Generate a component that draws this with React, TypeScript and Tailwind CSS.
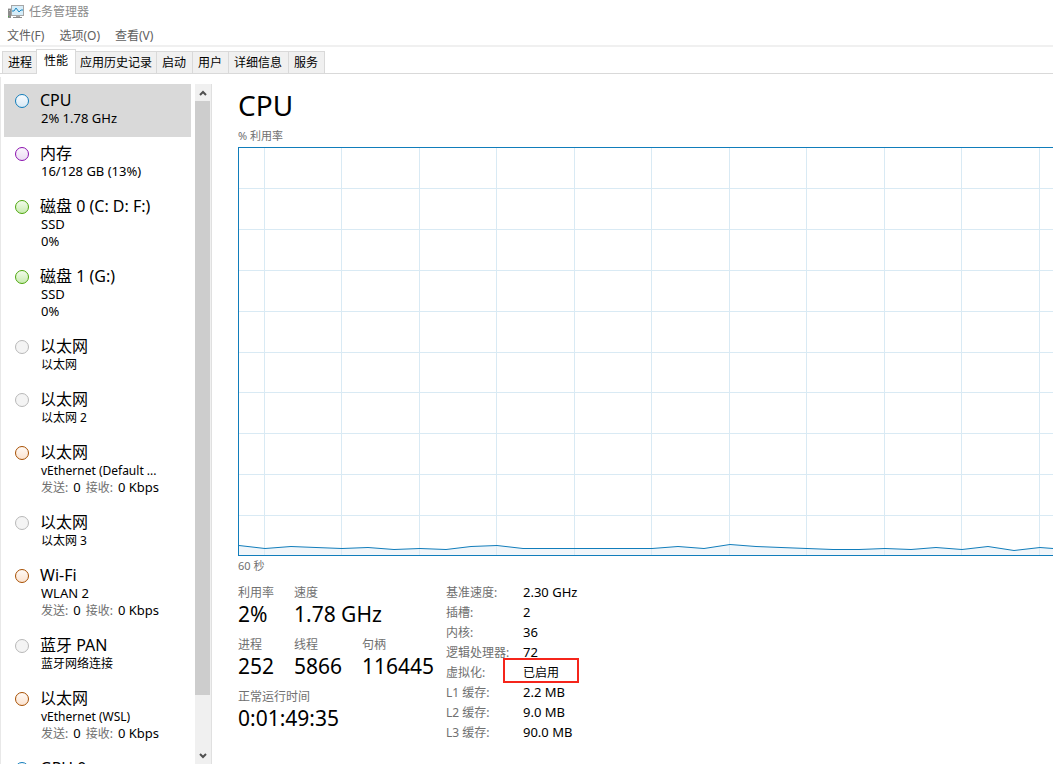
import type { ReactNode } from "react";

const menus = ["文件(F)", "选项(O)", "查看(V)"];
const tabs = ["进程", "性能", "应用历史记录", "启动", "用户", "详细信息", "服务"];

const dots = {
  blue: "border-[#117dbb] from-[#f8fbfe] to-[#d8e9f5]",
  purple: "border-[#8b12ae] from-[#fbf6fd] to-[#ecdcf3]",
  green: "border-[#4da60c] from-[#f3fbec] to-[#c8ebb0]",
  gray: "border-[#b8b8b8] from-[#f4f4f4] to-[#f4f4f4]",
  orange: "border-[#a74f01] from-[#fffaf6] to-[#fbe3d0]",
};

type Device = {
  name: string;
  dot: keyof typeof dots;
  detail: string;
  extra?: string;
  traffic?: boolean;
};

const devices: Device[] = [
  { name: "CPU", dot: "blue", detail: "2% 1.78 GHz" },
  { name: "内存", dot: "purple", detail: "16/128 GB (13%)" },
  { name: "磁盘 0 (C: D: F:)", dot: "green", detail: "SSD", extra: "0%" },
  { name: "磁盘 1 (G:)", dot: "green", detail: "SSD", extra: "0%" },
  { name: "以太网", dot: "gray", detail: "以太网" },
  { name: "以太网", dot: "gray", detail: "以太网 2" },
  { name: "以太网", dot: "orange", detail: "vEthernet (Default ...", traffic: true },
  { name: "以太网", dot: "gray", detail: "以太网 3" },
  { name: "Wi-Fi", dot: "orange", detail: "WLAN 2", traffic: true },
  { name: "蓝牙 PAN", dot: "gray", detail: "蓝牙网络连接" },
  { name: "以太网", dot: "orange", detail: "vEthernet (WSL)", traffic: true },
  { name: "GPU 0", dot: "blue", detail: "" },
];

const specs = [
  ["基准速度:", "2.30 GHz"],
  ["插槽:", "2"],
  ["内核:", "36"],
  ["逻辑处理器:", "72"],
  ["虚拟化:", "已启用"],
  ["L1 缓存:", "2.2 MB"],
  ["L2 缓存:", "9.0 MB"],
  ["L3 缓存:", "90.0 MB"],
];

// CPU load samples, as pixels above the bottom edge of the graph
const samples = [
  10, 7, 9, 8, 7, 8, 6, 7, 6, 9, 10, 7, 7, 7, 7, 7, 7, 9, 7, 11, 9, 8, 7, 6, 6, 7, 6, 8, 6, 9, 5, 8, 6,
];
const GRAPH_HEIGHT = 407;
const SAMPLE_STEP = 25.83;

const isChinese = (text: string) => /[\u4e00-\u9fff]/.test(text);

function AppIcon() {
  return (
    <svg aria-hidden="true" className="h-4 w-4" viewBox="0 0 16 16" fill="none">
      <path d="M0 4h3v10H0z" fill="#8c8c8c" />
      <path d="M0 4h3v1H0zM1 6h1v1H1z" fill="#d0d0d0" />
      <path d="M0 12h1v1H0z" fill="#4fae4a" />
      <path d="M3 1h13v11H3z" fill="#a6a6a6" />
      <path d="M4 2h11v9H4z" fill="#d6edf9" />
      <path d="M4 7h2l2-3 3 4 2-2h2" stroke="#1c87c0" />
      <path d="M8 12h4v1H8z" fill="#a6a6a6" />
      <path d="M5 13h9v1H5z" fill="#8c8c8c" />
    </svg>
  );
}

function Traffic() {
  return (
    <span className="flex gap-[5px]">
      <span className="text-xs leading-[17px] text-[#707070]">发送:</span>
      <span>0</span>
      <span className="text-xs leading-[17px] text-[#707070]">接收:</span>
      <span>0 Kbps</span>
    </span>
  );
}

function DeviceItem({ device, selected }: { device: Device; selected: boolean }) {
  const small = isChinese(device.detail) || device.detail.startsWith("vEthernet");
  return (
    <li>
      <button
        aria-current={selected}
        className={`flex w-full gap-[11px] pt-[6px] pb-[10px] pl-[11px] text-left ${selected ? "bg-[#d9d9d9]" : ""}`}
      >
        <span className={`mt-1 size-[14px] shrink-0 rounded-full border bg-linear-to-b ${dots[device.dot]}`} />
        <span className="min-w-0 whitespace-nowrap">
          <span className="block text-base leading-5">{device.name}</span>
          <span className={`block pl-px leading-[17px] ${small ? "text-xs leading-[17px]" : "text-[13px]"}`}>
            {device.detail}
          </span>
          {(device.traffic || device.extra) && (
            <span className="block pl-px text-[13px] leading-[17px]">
              {device.traffic ? <Traffic /> : device.extra}
            </span>
          )}
        </span>
      </button>
    </li>
  );
}

function ScrollButton({ label, path }: { label: string; path: string }) {
  return (
    <button aria-label={label} className="flex h-[17px] w-[15px] shrink-0 items-center justify-center">
      <svg aria-hidden="true" className="h-2 w-2" viewBox="0 0 8 8" fill="none">
        <path d={path} stroke="#505050" strokeWidth="2" />
      </svg>
    </button>
  );
}

function UsageGraph() {
  const line = samples.map((v, i) => `${Math.round(i * SAMPLE_STEP)},${GRAPH_HEIGHT - v + 0.5}`).join(" ");
  const end = Math.round((samples.length - 1) * SAMPLE_STEP);
  return (
    <svg
      role="img"
      aria-label="% 利用率"
      className="block h-[409px] w-full border-y border-l border-[#117dbb]"
      fill="none"
    >
      <polygon points={`0,${GRAPH_HEIGHT} ${line} ${end},${GRAPH_HEIGHT}`} fill="#f1f6fa" />
      <g stroke="#d9eaf4" shapeRendering="crispEdges">
        {Array.from({ length: 11 }, (_, i) => {
          const x = Math.floor(25 + i * 77.5) + 0.5;
          return <line key={x} x1={x} x2={x} y1="0" y2={GRAPH_HEIGHT} />;
        })}
        {Array.from({ length: 9 }, (_, i) => {
          const y = Math.floor((i + 1) * 40.8) + 0.5;
          return <line key={y} x1="0" x2="100%" y1={y} y2={y} />;
        })}
      </g>
      <polyline points={line} stroke="#117dbb" />
    </svg>
  );
}

function Stat({ label, children }: { label: string; children: ReactNode }) {
  return (
    <div className="whitespace-nowrap">
      <dt className="text-xs leading-5 text-[#707070]">{label}</dt>
      <dd className="text-[21px] leading-[22px]">{children}</dd>
    </div>
  );
}

export default function App() {
  return (
    <div className="flex h-screen flex-col overflow-hidden bg-white font-['Noto_Sans','Noto_Sans_CJK_SC',sans-serif] text-black">
      <header className="shrink-0">
        <div className="flex h-6 items-center gap-[5px] pl-2 text-xs text-[#8c8c8c]">
          <AppIcon />
          <h1>任务管理器</h1>
        </div>
        <nav
          aria-label="菜单"
          className="flex h-[23px] items-center gap-[15px] border-b-2 border-[#f0f0f0] pt-[3px] pl-[7px] text-xs text-[#606060]"
        >
          {menus.map((menu) => (
            <button key={menu}>{menu}</button>
          ))}
        </nav>
        <div role="tablist" className="flex h-[27px] items-end border-b border-[#d9d9d9] pl-[2px] text-xs">
          {tabs.map((tab) =>
            tab === "性能" ? (
              <button
                key={tab}
                role="tab"
                aria-selected="true"
                className="-mb-px h-[25px] border border-b-0 border-[#d9d9d9] bg-white px-[7px] pb-[2px]"
              >
                {tab}
              </button>
            ) : (
              <button
                key={tab}
                role="tab"
                aria-selected="false"
                className="h-[22px] border-t border-r border-[#d9d9d9] bg-[#f0f0f0] pr-[6px] pl-[5px] first:border-l first:border-r-0 first:pr-1 nth-3:px-1"
              >
                {tab}
              </button>
            ),
          )}
        </div>
      </header>

      <div className="mt-[3px] flex min-h-0 flex-1 border-l border-[#e8e8e8] pt-[7px]">
        <aside className="flex w-[211px] shrink-0 border-r border-[#e0e0e0] pl-[3px]">
          <ul className="mr-1 min-w-0 flex-1 overflow-hidden">
            {devices.map((device, i) => (
              <DeviceItem key={i} device={device} selected={i === 0} />
            ))}
          </ul>
          <div className="flex w-4 flex-col bg-[#f0f0f0]">
            <ScrollButton label="向上滚动" path="M1 6l3-3 3 3" />
            <div className="min-h-0 flex-1">
              <div className="h-[92%] w-[15px] bg-[#cdcdcd]" />
            </div>
            <ScrollButton label="向下滚动" path="M1 2l3 3 3-3" />
          </div>
        </aside>

        <main className="min-w-0 flex-1 pl-[26px]">
          <h2 className="pt-1 pb-[2px] text-[28px] leading-[34px]">CPU</h2>
          <p className="pt-1 pb-[3px] text-[11px] leading-4 text-[#707070]">% 利用率</p>
          <UsageGraph />
          <p className="pt-[2px] text-[11px] leading-4 text-[#707070]">60 秒</p>

          <div className="flex gap-3 pt-[9px]">
            <dl className="grid w-[196px] shrink-0 grid-cols-[56px_68px_1fr] content-start gap-y-[10px]">
              <Stat label="利用率">2%</Stat>
              <div className="col-span-2">
                <Stat label="速度">1.78 GHz</Stat>
              </div>
              <Stat label="进程">252</Stat>
              <Stat label="线程">5866</Stat>
              <Stat label="句柄">116445</Stat>
              <div className="col-span-3">
                <Stat label="正常运行时间">0:01:49:35</Stat>
              </div>
            </dl>
            <dl className="whitespace-nowrap">
              {specs.map(([label, value]) => (
                <div key={label} className="relative flex h-5">
                  <dt className="w-[77px] text-xs leading-5 text-[#707070]">{label}</dt>
                  <dd className={isChinese(value) ? "text-xs leading-5" : "text-[13px] leading-[18px]"}>{value}</dd>
                  {label === "虚拟化:" && (
                    <span className="absolute -top-[5px] left-[57px] h-[25px] w-[76px] border-2 border-[#f5251b]" />
                  )}
                </div>
              ))}
            </dl>
          </div>
        </main>
      </div>
    </div>
  );
}
